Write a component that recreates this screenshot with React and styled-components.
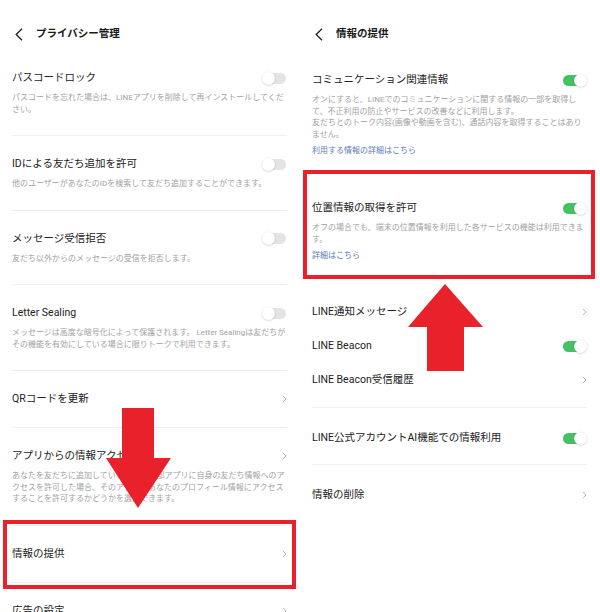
import React from "react";
import styled, { createGlobalStyle } from "styled-components";

const GlobalStyle = createGlobalStyle`
  html, body {
    margin: 0;
    padding: 0;
    background: #fff;
  }
  body {
    font-family: Roboto, "Noto Sans CJK JP", sans-serif;
    -webkit-font-smoothing: antialiased;
  }
`;

const Page = styled.div`
  position: relative;
  display: flex;
  width: 600px;
  height: 612px;
  overflow: hidden;
  background: #fff;
`;

const Panel = styled.section`
  flex: none;
  width: 300px;
  box-sizing: border-box;
  padding: 0 13px 0 12px;
`;

const Header = styled.header`
  display: flex;
  align-items: center;
  height: 16px;
  margin: 26px 0 8px;
`;

const BackIcon = styled.svg`
  flex: none;
  margin-left: 3px;
  margin-right: 13px;
`;

const HeaderTitle = styled.h1`
  margin: 0;
  font-size: 10.5px;
  line-height: 16px;
  font-weight: 700;
  color: #1a1a1a;
`;

const Row = styled.div`
  padding: ${(p) => p.$pt ?? 20}px 0 ${(p) => p.$pb ?? 20}px;
  border-bottom: ${(p) => (p.$divider ? "1px solid #efefef" : "none")};
`;

const RowHead = styled.div`
  display: flex;
  align-items: center;
  justify-content: space-between;
  height: 16px;
`;

const Title = styled.span`
  font-size: 10.5px;
  line-height: 16px;
  color: #222;
  white-space: nowrap;
`;

const Desc = styled.p`
  margin: 6px 0 0;
  font-size: 8px;
  line-height: 11.5px;
  color: #a2a2a2;
  white-space: nowrap;
`;

const Link = styled.a`
  display: block;
  margin-top: 5px;
  font-size: 8px;
  line-height: 12px;
  color: #5a7cb8;
  text-decoration: none;
`;

const Toggle = styled.span`
  position: relative;
  flex: none;
  width: 25px;
  height: 13px;
  &::before {
    content: "";
    position: absolute;
    left: 1px;
    right: 1px;
    top: 1px;
    height: 11px;
    border-radius: 6px;
    background: ${(p) => (p.$on ? "#45c164" : "#e4e4e4")};
  }
  &::after {
    content: "";
    position: absolute;
    top: 0;
    ${(p) => (p.$on ? "right: 0;" : "left: 0;")}
    width: 13px;
    height: 13px;
    border-radius: 50%;
    background: #fff;
    box-shadow: 0 0.5px 2px rgba(0, 0, 0, 0.22);
  }
`;

const Overlay = styled.svg`
  position: absolute;
  left: 0;
  top: 0;
  pointer-events: none;
`;

function Chevron() {
  return (
    <svg width="5" height="8" viewBox="0 0 5 8">
      <polyline
        points="0.8,0.8 4,4 0.8,7.2"
        fill="none"
        stroke="#b8b8b8"
        strokeWidth="1"
      />
    </svg>
  );
}

function Back() {
  return (
    <BackIcon width="8" height="13" viewBox="0 0 8 13">
      <polyline
        points="7,0.8 1.2,6.5 7,12.2"
        fill="none"
        stroke="#222"
        strokeWidth="1.3"
      />
    </BackIcon>
  );
}

function Setting({ title, on, chevron, desc, link, pt, pb, divider = true }) {
  return (
    <Row $pt={pt} $pb={pb} $divider={divider}>
      <RowHead>
        <Title>{title}</Title>
        {on !== undefined && <Toggle $on={on} />}
        {chevron && <Chevron />}
      </RowHead>
      {desc && <Desc>{desc}</Desc>}
      {link && <Link>{link}</Link>}
    </Row>
  );
}

const RED = "#e8212b";

export default function App() {
  return (
    <>
      <GlobalStyle />
      <Page>
        <Panel>
          <Header>
            <Back />
            <HeaderTitle>プライバシー管理</HeaderTitle>
          </Header>
          <Setting
            title="パスコードロック"
            on={false}
            desc={
              <>
                パスコードを忘れた場合は、LINEアプリを削除して再インストールしてくだ
                <br />
                さい。
              </>
            }
          />
          <Setting
            title="IDによる友だち追加を許可"
            on={false}
            desc="他のユーザーがあなたのIDを検索して友だち追加することができます。"
          />
          <Setting
            title="メッセージ受信拒否"
            on={false}
            desc="友だち以外からのメッセージの受信を拒否します。"
          />
          <Setting
            title="Letter Sealing"
            on={false}
            desc={
              <>
                メッセージは高度な暗号化によって保護されます。 Letter Sealingは友だちが
                <br />
                その機能を有効にしている場合に限りトークで利用できます。
              </>
            }
          />
          <Setting title="QRコードを更新" chevron />
          <Setting
            title="アプリからの情報アクセス"
            chevron
            desc={
              <>
                あなたを友だちに追加しているLINEの外部アプリに自身の友だち情報へのア
                <br />
                クセスを許可した場合、そのアプリがあなたのプロフィール情報にアクセス
                <br />
                することを許可するかどうかを選択できます。
              </>
            }
          />
          <Setting title="情報の提供" chevron />
          <Setting title="広告の設定" chevron />
        </Panel>

        <Panel>
          <Header>
            <Back />
            <HeaderTitle>情報の提供</HeaderTitle>
          </Header>
          <Setting
            title="コミュニケーション関連情報"
            on
            pt={22}
            pb={14}
            desc={
              <>
                オンにすると、LINEでのコミュニケーションに関する情報の一部を取得し
                <br />
                て、不正利用の防止やサービスの改善などに利用します。
                <br />
                友だちとのトーク内容(画像や動画を含む)、通話内容を取得することはあり
                <br />
                ません。
              </>
            }
            link="利用する情報の詳細はこちら"
          />
          <Setting
            title="位置情報の取得を許可"
            on
            pt={28}
            pb={33}
            divider={false}
            desc={
              <>
                オフの場合でも、端末の位置情報を利用した各サービスの機能は利用できま
                <br />
                す。
              </>
            }
            link="詳細はこちら"
          />
          <Setting title="LINE通知メッセージ" chevron pt={9} pb={9} divider={false} />
          <Setting title="LINE Beacon" on pt={9} pb={9} divider={false} />
          <Setting title="LINE Beacon受信履歴" chevron pt={9} pb={19} />
          <Setting title="LINE公式アカウントAI機能での情報利用" on pt={22} pb={18} />
          <Setting title="情報の削除" chevron pt={22} divider={false} />
        </Panel>

        {/* highlight boxes and arrows drawn over both screens */}
        <Overlay width="600" height="612" viewBox="0 0 600 612">
          <rect x="5" y="522" width="289" height="65" fill="none" stroke={RED} strokeWidth="4" />
          <rect x="305" y="172" width="288" height="105" fill="none" stroke={RED} strokeWidth="4" />
          <polygon
            points="122,408 154,408 154,458 171,458 138,508 106,458 122,458"
            fill={RED}
          />
          <polygon
            points="445,284 483,327 464,327 464,371 427,371 427,327 408,327"
            fill={RED}
          />
        </Overlay>
      </Page>
    </>
  );
}
